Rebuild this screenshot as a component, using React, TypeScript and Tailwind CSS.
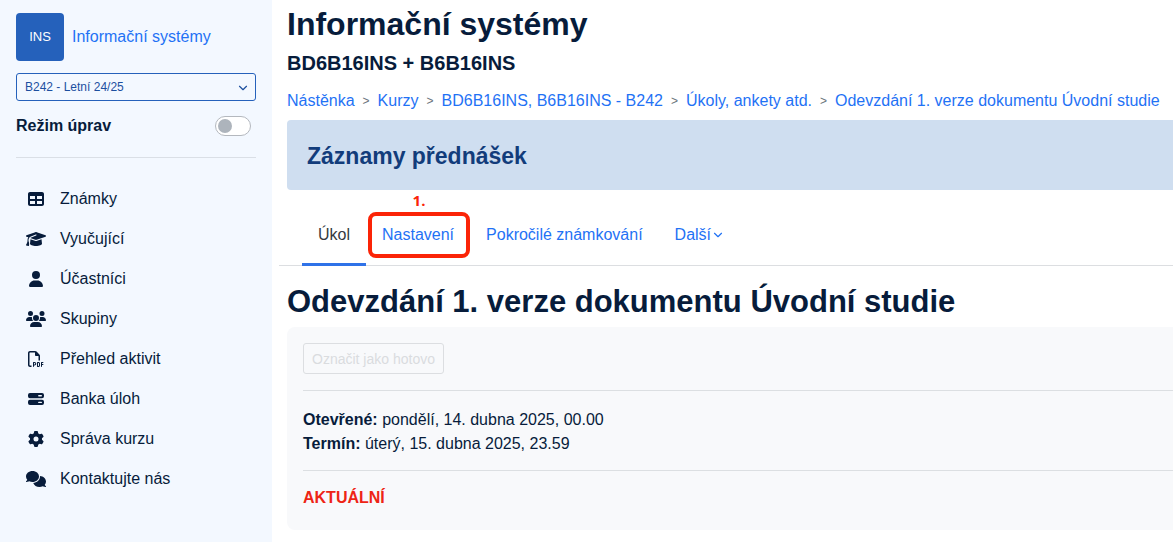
import { ReactNode, useState } from "react"
import { LuChevronDown } from "react-icons/lu"
import {
	FaComments,
	FaGear,
	FaGraduationCap,
	FaRegFilePdf,
	FaTable,
	FaUser,
	FaUsers,
} from "react-icons/fa6"

function ServerIcon() {
	return (
		<svg viewBox="0 0 16 16" className="size-4" fill="currentColor" aria-hidden="true">
			<path
				fillRule="evenodd"
				d="M2 2h12a2 2 0 0 1 2 2v1.2a2 2 0 0 1-2 2H2a2 2 0 0 1-2-2V4a2 2 0 0 1 2-2Zm8.8 2a.7.7 0 0 0 0 1.4h2.5a.7.7 0 0 0 0-1.4ZM2 8.8h12a2 2 0 0 1 2 2V12a2 2 0 0 1-2 2H2a2 2 0 0 1-2-2v-1.2a2 2 0 0 1 2-2Zm8.8 1.9a.7.7 0 0 0 0 1.4h2.5a.7.7 0 0 0 0-1.4Z"
			/>
		</svg>
	)
}

const menu = [
	{ label: "Známky", icon: <FaTable className="size-4" /> },
	{ label: "Vyučující", icon: <FaGraduationCap className="h-4 w-5" /> },
	{ label: "Účastníci", icon: <FaUser className="h-4 w-[14px]" /> },
	{ label: "Skupiny", icon: <FaUsers className="h-4 w-5" /> },
	{ label: "Přehled aktivit", icon: <FaRegFilePdf className="size-4" /> },
	{ label: "Banka úloh", icon: <ServerIcon /> },
	{ label: "Správa kurzu", icon: <FaGear className="size-4" /> },
	{ label: "Kontaktujte nás", icon: <FaComments className="h-4 w-5" /> },
]

const breadcrumbs = [
	"Nástěnka",
	"Kurzy",
	"BD6B16INS, B6B16INS - B242",
	"Úkoly, ankety atd.",
	"Odevzdání 1. verze dokumentu Úvodní studie",
]

function Sidebar() {
	const [editMode, setEditMode] = useState(false)

	return (
		<aside className="w-[272px] shrink-0 bg-[#f3f8ff] px-4 pt-[13px]">
			<a href="#kurz" className="flex items-center gap-2 text-[#1f72f5]">
				<span className="flex size-12 items-center justify-center rounded bg-[#2561bb] text-[13px] text-white">
					INS
				</span>
				Informační systémy
			</a>

			<div className="relative mt-3">
				<select
					aria-label="Semestr"
					className="block h-7 w-full appearance-none rounded-[3px] border border-[#2561bb] bg-[#f3f8ff] px-2 text-xs text-[#1c4f9f]"
				>
					<option>B242 - Letní 24/25</option>
				</select>
				<LuChevronDown className="pointer-events-none absolute top-2 right-[6px] size-[14px] text-[#1c4f9f]" />
			</div>

			<div className="mt-[13px] flex items-center justify-between border-b border-[#dadfe6] pb-[19px]">
				<label htmlFor="edit-mode" className="font-bold">
					Režim úprav
				</label>
				<input
					id="edit-mode"
					type="checkbox"
					role="switch"
					checked={editMode}
					onChange={() => setEditMode(!editMode)}
					className="mr-[5px] flex h-5 w-9 appearance-none items-center rounded-full border border-[#b4b8be] bg-white px-[2px] before:size-[14px] before:rounded-full before:bg-[#adb4bc] checked:justify-end"
				/>
			</div>

			<nav className="mt-[21px]">
				<ul>
					{menu.map(({ label, icon }) => (
						<li key={label}>
							<a href="#menu" className="flex h-10 items-center gap-3 pl-2">
								<span className="flex w-6 justify-center">{icon}</span>
								{label}
							</a>
						</li>
					))}
				</ul>
			</nav>
		</aside>
	)
}

interface TabProps {
	children: ReactNode
	active?: boolean
}

function Tab({ children, active = false }: TabProps) {
	return (
		<a
			href="#tab"
			aria-current={active ? "page" : undefined}
			className={
				active
					? "-mb-px flex h-[62px] items-center border-b-3 border-[#2f72e8] px-4 pt-[2px] text-[#343a40]"
					: "-mb-px flex h-[62px] items-center border-b-3 border-transparent px-4 pt-[2px] text-[#1f72f5]"
			}
		>
			{children}
		</a>
	)
}

function Tabs() {
	return (
		<nav className="-ml-2 mt-[14px] flex border-b border-[#dcdee1] pl-[23px]">
			<Tab active>Úkol</Tab>
			<div className="relative">
				<Tab>Nastavení</Tab>
				{/* numbered highlight around the tab */}
				<div className="pointer-events-none absolute right-0 left-[2px] top-2 h-[46px] rounded-lg border-4 border-[#fb2407]">
					<span className="absolute inset-x-0 -top-7 text-center font-['Open_Sans',sans-serif] text-[15px] leading-6 font-bold text-[#fb2407]">
						1.
					</span>
				</div>
			</div>
			<Tab>Pokročilé známkování</Tab>
			<Tab>
				Další
				<LuChevronDown className="size-[14px]" />
			</Tab>
		</nav>
	)
}

export default function App() {
	return (
		<div className="flex min-h-screen overflow-hidden bg-white font-['Liberation_Sans',Arial,sans-serif] text-base text-[#071c3b]">
			<Sidebar />

			<main className="min-w-0 flex-1 pb-3 pl-[15px]">
				<h1 className="mt-1 text-[32px] leading-10 font-bold">Informační systémy</h1>
				<h2 className="mt-[7px] text-xl leading-6 font-bold">BD6B16INS + B6B16INS</h2>

				<nav aria-label="Drobečková navigace" className="mt-[14px]">
					<ol className="flex whitespace-nowrap">
						{breadcrumbs.map((item, i) => (
							<li key={item} className="flex items-center">
								{i > 0 && <span className="px-2 text-xs text-[#6a737b]">&gt;</span>}
								<a href="#nav" className="text-[#1f72f5]">
									{item}
								</a>
							</li>
						))}
					</ol>
				</nav>

				<div className="mt-[7px] rounded-l bg-[#cfdef0] px-5 pt-5 pb-[18px] text-[23px] leading-8 text-[#123c7b]">
					<h3 className="font-bold">Záznamy přednášek</h3>
				</div>

				<Tabs />

				<h2 className="mt-4 text-[31px] leading-10 font-bold">
					Odevzdání 1. verze dokumentu Úvodní studie
				</h2>

				<section className="mt-[5px] rounded-l-lg bg-[#f8f9fb] pt-4 pb-5 pl-4">
					<button
						type="button"
						disabled
						className="block h-[31px] rounded-[3px] border border-[#dcdee1] px-2 text-sm text-[#dadcdf]"
					>
						Označit jako hotovo
					</button>
					<div className="mt-4 border-y border-[#dcdfe2] pt-[17px] pb-[14px]">
						<p>
							<strong>Otevřené:</strong> pondělí, 14. dubna 2025, 00.00
						</p>
						<p>
							<strong>Termín:</strong> úterý, 15. dubna 2025, 23.59
						</p>
					</div>
					<p className="mt-[15px] font-bold text-[#ee2415]">AKTUÁLNÍ</p>
				</section>
			</main>
		</div>
	)
}
